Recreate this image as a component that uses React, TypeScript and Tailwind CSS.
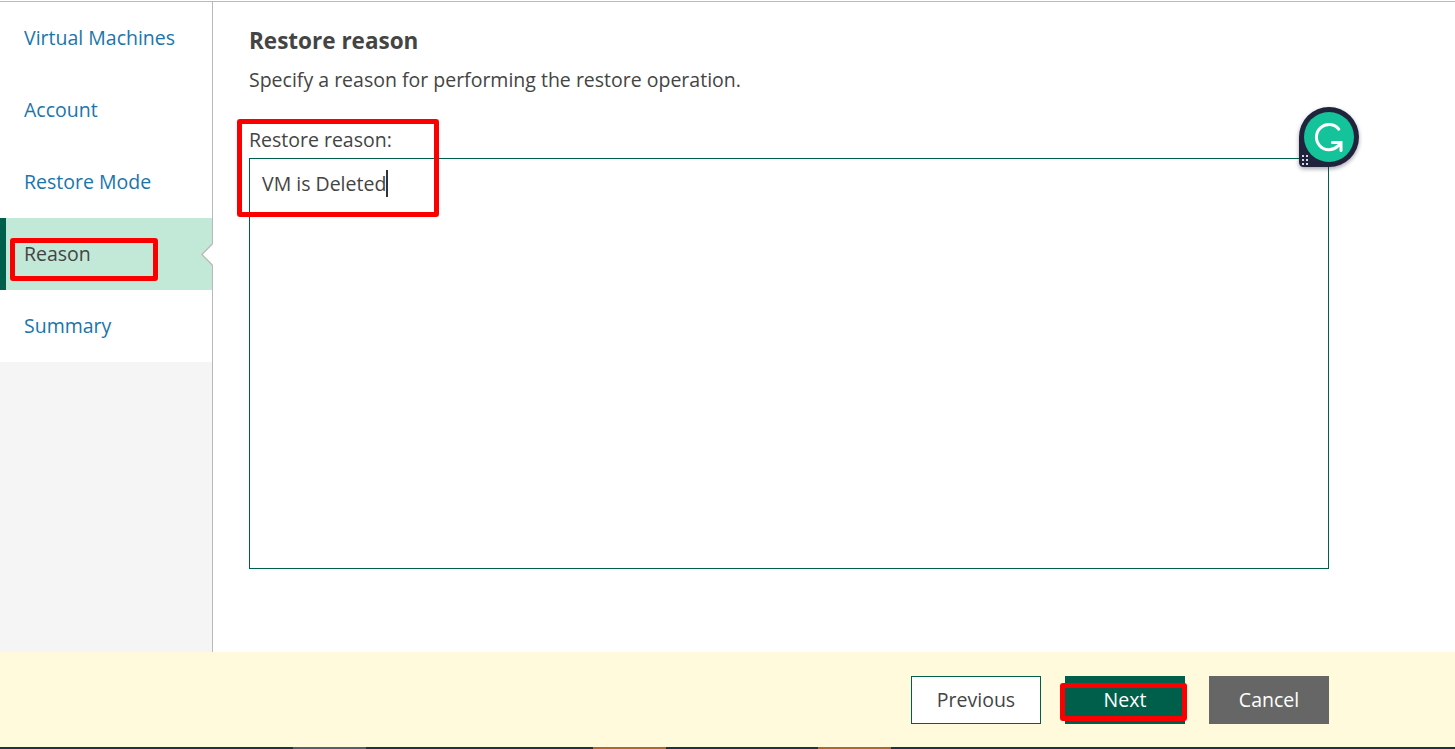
const steps = ["Virtual Machines", "Account", "Restore Mode", "Reason", "Summary"];

function AssistantBadge() {
  return (
    <svg
      className="absolute -top-[58px] left-[1043px] overflow-visible drop-shadow-[0_2px_2px_rgba(30,30,60,0.4)]"
      width="66"
      height="66"
      viewBox="0 0 66 66"
      fill="none"
    >
      <path d="M6 36 A30 30 0 1 1 36 66 H11 Q6 66 6 61 Z" fill="#1f243c" />
      <circle cx="36" cy="36" r="25" fill="#15c39a" />
      <path
        d="M45.8 28.2 A12.6 12.6 0 1 0 44.8 45.2 L48 41.5 M39.5 41.5 H48 V49.5"
        stroke="#fff"
        strokeWidth="3"
        strokeLinecap="round"
        strokeLinejoin="miter"
      />
      <g fill="#d7d9e4">
        <rect x="9" y="54" width="2" height="2" />
        <rect x="13" y="54" width="2" height="2" />
        <rect x="9" y="58" width="2" height="2" />
        <rect x="13" y="58" width="2" height="2" />
        <rect x="9" y="62" width="2" height="2" />
        <rect x="13" y="62" width="2" height="2" />
      </g>
    </svg>
  );
}

export default function App() {
  return (
    <div className="flex h-[749px] w-[1455px] flex-col overflow-hidden bg-white pt-px font-['Open_Sans','Noto_Sans',sans-serif] text-[19.5px] leading-6 text-[#444]">
      <div className="flex h-[651px] border-t border-[#b9b9b9]">
        <nav className="w-[213px] shrink-0 border-r border-[#b9b9b9] bg-[#f5f5f5]">
          {steps.map((step) =>
            step === "Reason" ? (
              <div key={step} className="relative flex h-18 items-center border-l-6 border-[#005f4b] bg-[#c2e8d7] pl-[18px]">
                {step}
                <svg className="absolute top-[25px] -right-px" width="12" height="23" viewBox="0 0 12 23">
                  <path d="M12 0.2 L0.9 11.5 L12 22.8" fill="#fff" stroke="#b9b9b9" strokeWidth="1.3" />
                </svg>
                <div className="absolute top-5 left-1 h-[43px] w-[148px] rounded-[3px] border-5 border-[#fa0000]" />
              </div>
            ) : (
              <div key={step} className="flex h-18 items-center bg-white pl-6 text-[#1a75ab]">
                {step}
              </div>
            )
          )}
        </nav>
        <main className="pt-[26px] pl-9">
          <h1 className="text-[22.5px] font-bold leading-[26px]">Restore reason</h1>
          <p className="mt-[14px]">Specify a reason for performing the restore operation.</p>
          <label className="mt-9 block">Restore reason:</label>
          <div className="relative mt-[6px] flex h-[411px] w-[1080px] items-start border border-[#005f4b] bg-white pt-[13px] pl-3">
            <span>VM is Deleted</span>
            <span className="-mt-[2px] h-[27px] w-[2px] bg-[#333]" />
            <div className="absolute -top-10 -left-[13px] h-[98px] w-[202px] rounded-[3px] border-5 border-[#fa0000]" />
            <AssistantBadge />
          </div>
        </main>
      </div>
      <footer className="flex h-[95px] items-start justify-end gap-6 bg-[#fffadb] pt-6 pr-[126px]">
        <button className="h-12 w-[130px] border border-[#005f4b] bg-white">Previous</button>
        <button className="relative h-12 w-[120px] bg-[#005f4b] text-white">
          Next
          <span className="absolute top-[7px] -left-[5px] h-[38px] w-[127px] rounded-[3px] border-5 border-[#fa0000]" />
        </button>
        <button className="h-12 w-[120px] bg-[#666] text-white">Cancel</button>
      </footer>
      <div className="flex h-[2px] bg-[#203340]">
        <div className="ml-[293px] w-[73px] bg-[#53616a]" />
        <div className="ml-[227px] w-[73px] bg-[#ad692d]" />
        <div className="ml-[152px] w-[73px] bg-[#ad692d]" />
      </div>
    </div>
  );
}
